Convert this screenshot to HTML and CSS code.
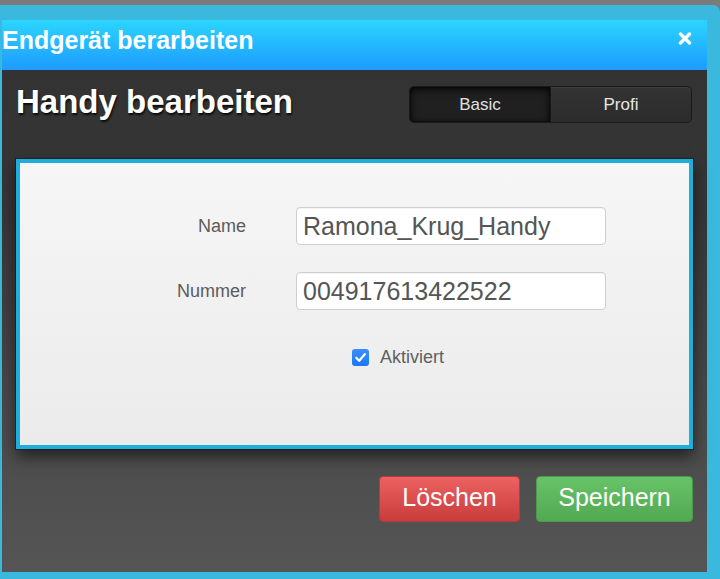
FILE: index.html
```html
<!DOCTYPE html>
<html lang="de">
<head>
<meta charset="utf-8">
<title>Endgerät berarbeiten</title>
<link rel="stylesheet" href="styles.css">
</head>
<body>
<div class="frame">
  <div class="dialog">
    <header class="dlg-head">
      <h1 class="dlg-title">Endgerät berarbeiten</h1>
      <button class="close" type="button" aria-label="Schließen">
        <svg width="14" height="13" viewBox="0 0 14 13"><path d="M2.5 2 L11.5 11 M11.5 2 L2.5 11" stroke="#fff" stroke-width="3.4" stroke-linecap="round" fill="none"/></svg>
      </button>
    </header>
    <div class="dlg-body">
      <div class="top-row">
        <h2 class="page-title">Handy bearbeiten</h2>
        <div class="seg">
          <button class="seg-btn active" type="button">Basic</button>
          <button class="seg-btn" type="button">Profi</button>
        </div>
      </div>
      <form class="panel">
        <label class="lbl" for="f-name">Name</label>
        <input class="field" id="f-name" type="text" value="Ramona_Krug_Handy">
        <label class="lbl" for="f-num">Nummer</label>
        <input class="field" id="f-num" type="text" value="004917613422522">
        <div class="check-row">
          <span class="cb"><svg width="17" height="17" viewBox="0 0 17 17"><path d="M4.3 8.9 L7.2 11.8 L12.8 5.2" stroke="#fff" stroke-width="2.2" stroke-linecap="round" stroke-linejoin="round" fill="none"/></svg></span>
          <span class="cb-label">Aktiviert</span>
        </div>
      </form>
      <div class="actions">
        <button class="btn btn-red" type="button">Löschen</button>
        <button class="btn btn-green" type="button">Speichern</button>
      </div>
    </div>
  </div>
</div>
</body>
</html>
```

FILE: styles.css
```css
html, body {
  margin: 0;
  padding: 0;
}
body {
  width: 720px;
  height: 579px;
  overflow: hidden;
  background: #7b7b7b;
  font-family: "Liberation Sans", Arial, sans-serif;
}
.frame {
  margin-top: 5px;
  background: #3ab8de;
  border-top-right-radius: 7px;
  padding: 15px 13px 7px 2px;
  height: 574px;
  box-sizing: border-box;
}
.dialog {
  display: flex;
  flex-direction: column;
  height: 552px;
}
.dlg-head {
  height: 50px;
  box-sizing: border-box;
  padding: 6px 15px 0 0;
  display: flex;
  justify-content: space-between;
  align-items: flex-start;
  background: linear-gradient(to bottom, #2bd6ff 0%, #24b8ff 50%, #1e9bff 100%);
}
.dlg-title {
  margin: 0;
  font-size: 25px;
  font-weight: bold;
  color: #fff;
  line-height: 28px;
}
.close {
  margin: 6px 0 0;
  padding: 0;
  border: 0;
  background: none;
  width: 14px;
  height: 13px;
  display: flex;
}
.dlg-body {
  flex: 1;
  padding: 16px 14px 0 14px;
  background: linear-gradient(to bottom, #333333 0%, #363636 28%, #4a4a4a 70%, #555555 100%);
}
.top-row {
  display: flex;
  justify-content: space-between;
  align-items: flex-start;
  height: 37px;
}
.page-title {
  margin: -1px 0 0 0;
  font-size: 33px;
  line-height: 33px;
  font-weight: bold;
  color: #fff;
  text-shadow: 1px 2px 2px rgba(0, 0, 0, 0.8);
}
.seg {
  display: flex;
  margin-right: 1px;
  height: 37px;
}
.seg-btn {
  width: 142px;
  height: 37px;
  border: 1px solid #191919;
  background: linear-gradient(to bottom, #333 0%, #2c2c2c 100%);
  color: #e6e6e6;
  font-family: "Liberation Sans", Arial, sans-serif;
  font-size: 17px;
  padding: 0;
  box-shadow: inset 0 1px 0 rgba(255, 255, 255, 0.06);
}
.seg-btn:first-child {
  border-radius: 5px 0 0 5px;
  width: 142px;
}
.seg-btn:last-child {
  border-radius: 0 5px 5px 0;
  border-left: 0;
  width: 141px;
}
.seg-btn.active {
  background: #202020;
  box-shadow: inset 0 2px 8px rgba(0, 0, 0, 0.9), inset 0 0 2px rgba(0, 0, 0, 0.9);
  color: #e0e0e0;
}
.panel {
  margin: 36px 0 0;
  height: 290px;
  box-sizing: border-box;
  border: 4px solid #1eaedb;
  background: linear-gradient(to bottom, #f6f6f6 0%, #ebebeb 100%);
  box-shadow: 0 0 0 1px rgba(0, 0, 0, 0.35), 0 8px 14px rgba(0, 0, 0, 0.55);
  padding-top: 44px;
  display: grid;
  grid-template-columns: 226px 310px;
  grid-auto-rows: min-content;
  column-gap: 50px;
  row-gap: 27px;
}
.lbl {
  text-align: right;
  font-size: 18px;
  color: #5c5c5c;
  line-height: 38px;
}
.field {
  height: 38px;
  box-sizing: border-box;
  border: 1px solid #cfcfcf;
  border-radius: 4px;
  background: #fff;
  padding: 0 6px;
  font-family: "Liberation Sans", Arial, sans-serif;
  font-size: 25px;
  color: #555;
  box-shadow: inset 0 1px 1px rgba(0, 0, 0, 0.05);
  outline: none;
  width: 310px;
}
.check-row {
  grid-column: 2;
  margin-top: 10px;
  padding-left: 56px;
  height: 20px;
  display: flex;
  align-items: center;
  gap: 11px;
}
.cb {
  width: 17px;
  height: 17px;
  border-radius: 3px;
  background: linear-gradient(to bottom, #3a8ffd 0%, #1a78f5 100%);
  display: flex;
  margin-top: 1px;
}
.cb-label {
  font-size: 18px;
  color: #5f5f5f;
}
.actions {
  margin-top: 27px;
  display: flex;
  justify-content: flex-end;
  gap: 16px;
}
.btn {
  height: 46px;
  border-radius: 4px;
  font-family: "Liberation Sans", Arial, sans-serif;
  font-size: 25px;
  color: #fff;
  padding: 0 0 3px;
}
.btn-red {
  width: 141px;
  border: 1px solid #b83a3a;
  background: linear-gradient(to bottom, #ec6161 0%, #c93c3c 100%);
}
.btn-green {
  width: 157px;
  border: 1px solid #4c9a4c;
  background: linear-gradient(to bottom, #68c368 0%, #51a951 100%);
}
```
